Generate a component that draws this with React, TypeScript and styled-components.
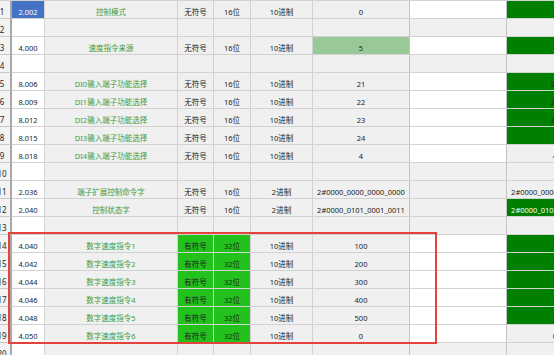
import React from 'react';
import styled, { createGlobalStyle } from 'styled-components';

const GlobalStyle = createGlobalStyle`
  html, body {
    margin: 0;
    padding: 0;
    background: #ffffff;
    overflow: hidden;
  }
  body {
    font-family: 'Noto Sans', 'Noto Sans CJK SC', sans-serif;
  }
`;

const Viewport = styled.div`
  position: relative;
  width: 554px;
  height: 355px;
  overflow: hidden;
  background: #f0f0f0;
`;

const Sheet = styled.div`
  display: grid;
  grid-template-columns: 18px 33px 133px 36px 37px 62px 97px 97px 97px;
  grid-auto-rows: 18px;
  margin-left: -6px;
  border-top: 1px solid #d2d2d2;
  margin-top: -0.3px;
  width: max-content;
`;

const RowHeader = styled.div`
  display: flex;
  align-items: flex-end;
  justify-content: center;
  padding-bottom: 1px;
  box-sizing: border-box;
  background: #f3f3f3;
  border-right: 2px solid #a8a8a8;
  border-bottom: 1px solid #c8c8c8;
  color: #262626;
  font-size: 8px;
  line-height: 10px;
`;

const Cell = styled.div<{ $bg?: string; $color?: string; $strong?: boolean }>`
  display: flex;
  align-items: flex-end;
  justify-content: center;
  padding-bottom: 1px;
  box-sizing: border-box;
  background: ${p => p.$bg || '#f0f0f0'};
  color: ${p => p.$color || '#222222'};
  border-right: 1px solid ${p => (p.$strong ? '#c4c4c4' : '#d2d2d2')};
  border-bottom: 1px solid #d2d2d2;
  font-size: 7.5px;
  line-height: 10px;
  white-space: nowrap;
  overflow: hidden;
`;

const Highlight = styled.div`
  position: absolute;
  left: 8px;
  top: 232px;
  width: 429px;
  height: 112px;
  box-sizing: border-box;
  border: 2px solid #e4423c;
  pointer-events: none;
`;

const NAME_GREEN = '#3f9c3f';
const DARK_GREEN = '#008000';
const BRIGHT_GREEN = '#22c11c';
const PALE_GREEN = '#99c996';

type Row = {
  addr?: string;
  name?: string;
  sign?: string;
  bits?: string;
  radix?: string;
  value?: string;
  valueBg?: string;
  typeBg?: string;
  hBg?: string;
  hText?: string;
  hColor?: string;
};

const u16 = { sign: '无符号', bits: '16位' };

const rows: Row[] = [
  { addr: '2.002', name: '控制模式', ...u16, radix: '10进制', value: '0', hBg: DARK_GREEN },
  {},
  { addr: '4.000', name: '速度指令来源', ...u16, radix: '10进制', value: '5', valueBg: PALE_GREEN, hBg: DARK_GREEN },
  {},
  { addr: '8.006', name: 'DI0输入端子功能选择', ...u16, radix: '10进制', value: '21', hBg: DARK_GREEN, hText: '21' },
  { addr: '8.009', name: 'DI1输入端子功能选择', ...u16, radix: '10进制', value: '22', hBg: DARK_GREEN, hText: '22' },
  { addr: '8.012', name: 'DI2输入端子功能选择', ...u16, radix: '10进制', value: '23', hBg: DARK_GREEN, hText: '23' },
  { addr: '8.015', name: 'DI3输入端子功能选择', ...u16, radix: '10进制', value: '24', hBg: DARK_GREEN },
  { addr: '8.018', name: 'DI4输入端子功能选择', ...u16, radix: '10进制', value: '4', hText: '4' },
  {},
  { addr: '2.036', name: '端子扩展控制命令字', ...u16, radix: '2进制', value: '2#0000_0000_0000_0000', hText: '2#0000_0000_0000_0000' },
  { addr: '2.040', name: '控制状态字', ...u16, radix: '2进制', value: '2#0000_0101_0001_0011', hBg: DARK_GREEN, hText: '2#0000_0101_0001_0011', hColor: '#ffffff' },
  {},
  ...[1, 2, 3, 4, 5, 6].map((i): Row => ({
    addr: `4.0${40 + (i - 1) * 2}`,
    name: `数字速度指令${i}`,
    sign: '有符号',
    bits: '32位',
    typeBg: BRIGHT_GREEN,
    radix: '10进制',
    value: i === 6 ? '0' : `${i * 100}`,
    hBg: i === 6 ? undefined : DARK_GREEN,
    hText: i === 6 ? '0' : undefined,
  })),
  {},
];

const App = () => {
  return (
    <Viewport>
      <GlobalStyle />
      <Sheet>
        {rows.map((r, i) => {
          const filled = !!r.addr;
          return (
            <React.Fragment key={i}>
              <RowHeader>{i + 1}</RowHeader>
              <Cell
                $bg={i === 0 ? '#4472c4' : '#ffffff'}
                $color={i === 0 ? '#ffffff' : '#262626'}
              >
                {r.addr}
              </Cell>
              <Cell $color={NAME_GREEN}>{r.name}</Cell>
              <Cell $bg={r.typeBg}>{r.sign}</Cell>
              <Cell $bg={r.typeBg}>{r.bits}</Cell>
              <Cell>{r.radix}</Cell>
              <Cell $bg={r.valueBg} $strong>
                {r.value}
              </Cell>
              <Cell
                $bg={filled && r.radix !== '2进制' ? '#ffffff' : undefined}
                $strong
              >
                {''}
              </Cell>
              <Cell $bg={r.hBg} $color={r.hColor}>
                {r.hText}
              </Cell>
            </React.Fragment>
          );
        })}
      </Sheet>
      <Highlight />
    </Viewport>
  );
};

export default App;
